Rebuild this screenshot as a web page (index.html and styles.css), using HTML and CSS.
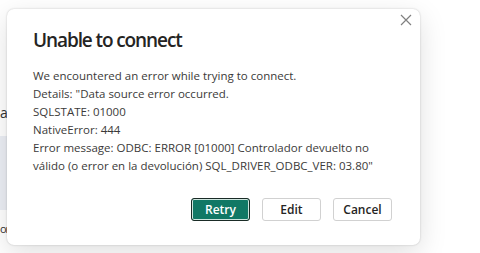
FILE: index.html
```html
<!DOCTYPE html>
<html>
<head>
    <meta charset="UTF-8">
    <meta name="viewport" content="width=device-width, initial-scale=1.0">
    <title>Unable to connect</title>
    <link rel="stylesheet" href="styles.css">
</head>
<body>
    <div class="page">
        <div class="side">
            <div class="side-label">a</div>
            <div class="side-panel"></div>
            <div class="side-foot">or</div>
        </div>
    </div>

    <div class="dialog">
        <button class="close-btn" aria-label="Close">
            <svg width="12" height="12" viewBox="0 0 12 12">
                <path d="M1 1 L11 11 M11 1 L1 11" stroke="#808080" stroke-width="1.2" fill="none"/>
            </svg>
        </button>
        <h2 class="title">Unable to connect</h2>
        <div class="message">
            <p>We encountered an error while trying to connect.</p>
            <p>Details: "Data source error occurred.</p>
            <p>SQLSTATE: 01000</p>
            <p>NativeError: 444</p>
            <p>Error message: ODBC: ERROR [01000] Controlador devuelto no válido (o error en la devolución) SQL_DRIVER_ODBC_VER: 03.80"</p>
        </div>
        <div class="actions">
            <button class="btn btn-primary">Retry</button>
            <button class="btn">Edit</button>
            <button class="btn">Cancel</button>
        </div>
    </div>
</body>
</html>
```

FILE: styles.css
```css
body { margin: 0; background: #fff; font-family: "Open Sans", "Noto Sans", Arial, sans-serif; color: #333; height: 253px; overflow: hidden; }
.page { height: 253px; }
.side { width: 8px; padding-top: 103px; font-size: 14px; color: #333; }
.side-label { height: 24px; line-height: 20px; }
.side-panel { height: 74px; background: #eceff5; margin-top: 9px; }
.side-foot { font-size: 11px; margin-top: 11px; letter-spacing: -1px; }

/* dialog sits over the page */
.dialog {
    position: absolute; left: 7px; top: 9px; width: 413px; height: 236px; box-sizing: border-box;
    background: #fff; border-radius: 7px; padding: 18px 28px 0 26px;
    box-shadow: 0 0 2px rgba(0,0,0,0.22), 0 8px 28px rgba(0,0,0,0.13);
}
.close-btn { position: absolute; top: -1px; right: 2px; width: 24px; height: 24px; border: 0; background: none; padding: 0; display: flex; align-items: center; justify-content: center; }
.title { margin: 0; font-size: 19px; font-weight: 600; line-height: 26px; color: #252423; letter-spacing: -1.1px; }
.message { margin-top: 14px; font-size: 11.5px; line-height: 18px; color: #3b3a39; }
.message p { margin: 0; }
.actions { display: flex; justify-content: flex-end; gap: 12px; margin-top: 23px; }
.btn {
    width: 59px; height: 23px; box-sizing: border-box; border: 1px solid #d1d1d1; border-radius: 3px;
    background: #fff; font-family: inherit; font-size: 12px; font-weight: 600; color: #252423; padding: 0;
}
.btn-primary { background: #117865; color: #fff; border-color: #1a2b26; box-shadow: inset 0 0 0 1px #cfe6df; }
```
